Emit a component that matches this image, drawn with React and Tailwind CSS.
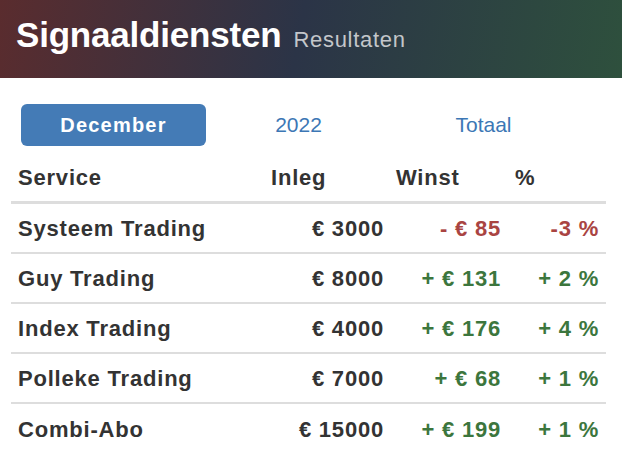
import React, { useState } from "react";

const rows = [
  { name: "Systeem Trading", inleg: "€ 3000", winst: "- € 85", pct: "-3 %", up: false },
  { name: "Guy Trading", inleg: "€ 8000", winst: "+ € 131", pct: "+ 2 %", up: true },
  { name: "Index Trading", inleg: "€ 4000", winst: "+ € 176", pct: "+ 4 %", up: true },
  { name: "Polleke Trading", inleg: "€ 7000", winst: "+ € 68", pct: "+ 1 %", up: true },
  { name: "Combi-Abo", inleg: "€ 15000", winst: "+ € 199", pct: "+ 1 %", up: true },
];

const tabs = ["December", "2022", "Totaal"];

const App = () => {
  const [active, setActive] = useState("December");

  return (
    <div className="w-[622px] h-[474px] overflow-hidden bg-white font-['Liberation_Sans',Arial,sans-serif] text-[#333]">

      {/* Header */}
      <div className="h-[78px] pt-[17px] pl-4 flex items-baseline bg-[linear-gradient(100deg,#5a2c2e_0%,#2b3447_48%,#2e503d_100%)]">
        <h1 className="text-[35px] leading-[35px] font-bold tracking-[-0.2px] text-white">Signaaldiensten</h1>
        <span className="ml-[12px] text-[22px] leading-[22px] tracking-[0.7px] text-[#c3c6ca]">Resultaten</span>
      </div>

      {/* Tabs */}
      <div className="mt-[26px] ml-[21px] w-[555px] grid grid-cols-3">
        {tabs.map((t) =>
          active === t ? (
            <button
              key={t}
              onClick={() => setActive(t)}
              className="h-[42px] rounded-[6px] bg-[#447bb6] text-white text-[20px] font-bold tracking-[1.2px]"
            >
              {t}
            </button>
          ) : (
            <button
              key={t}
              onClick={() => setActive(t)}
              className="h-[42px] text-[21px] text-[#3c77b5]"
            >
              {t}
            </button>
          )
        )}
      </div>

      {/* Table */}
      <div className="mt-[8px] ml-[11px] w-[595px] text-[22px] font-bold tracking-[0.8px]">
        <div className="h-[50px] grid grid-cols-[253px_127px_118px_97px] items-center border-b-[3px] border-[#ddd]">
          <div className="pl-[7px]">Service</div>
          <div className="pl-[7px]">Inleg</div>
          <div className="pl-[5px]">Winst</div>
          <div className="pl-[6px]">%</div>
        </div>

        <div className="divide-y-2 divide-[#ddd]">
          {rows.map((r) => (
            <div key={r.name} className="h-[50px] grid grid-cols-[253px_127px_118px_97px] items-center">
              <div className="pl-[7px]">{r.name}</div>
              <div className="pr-[7px] text-right">{r.inleg}</div>
              <div className={`pr-[8px] text-right ${r.up ? "text-[#3c763d]" : "text-[#a94442]"}`}>{r.winst}</div>
              <div className={`pr-[7px] text-right ${r.up ? "text-[#3c763d]" : "text-[#a94442]"}`}>{r.pct}</div>
            </div>
          ))}
        </div>
      </div>
    </div>
  );
};

export default App;
